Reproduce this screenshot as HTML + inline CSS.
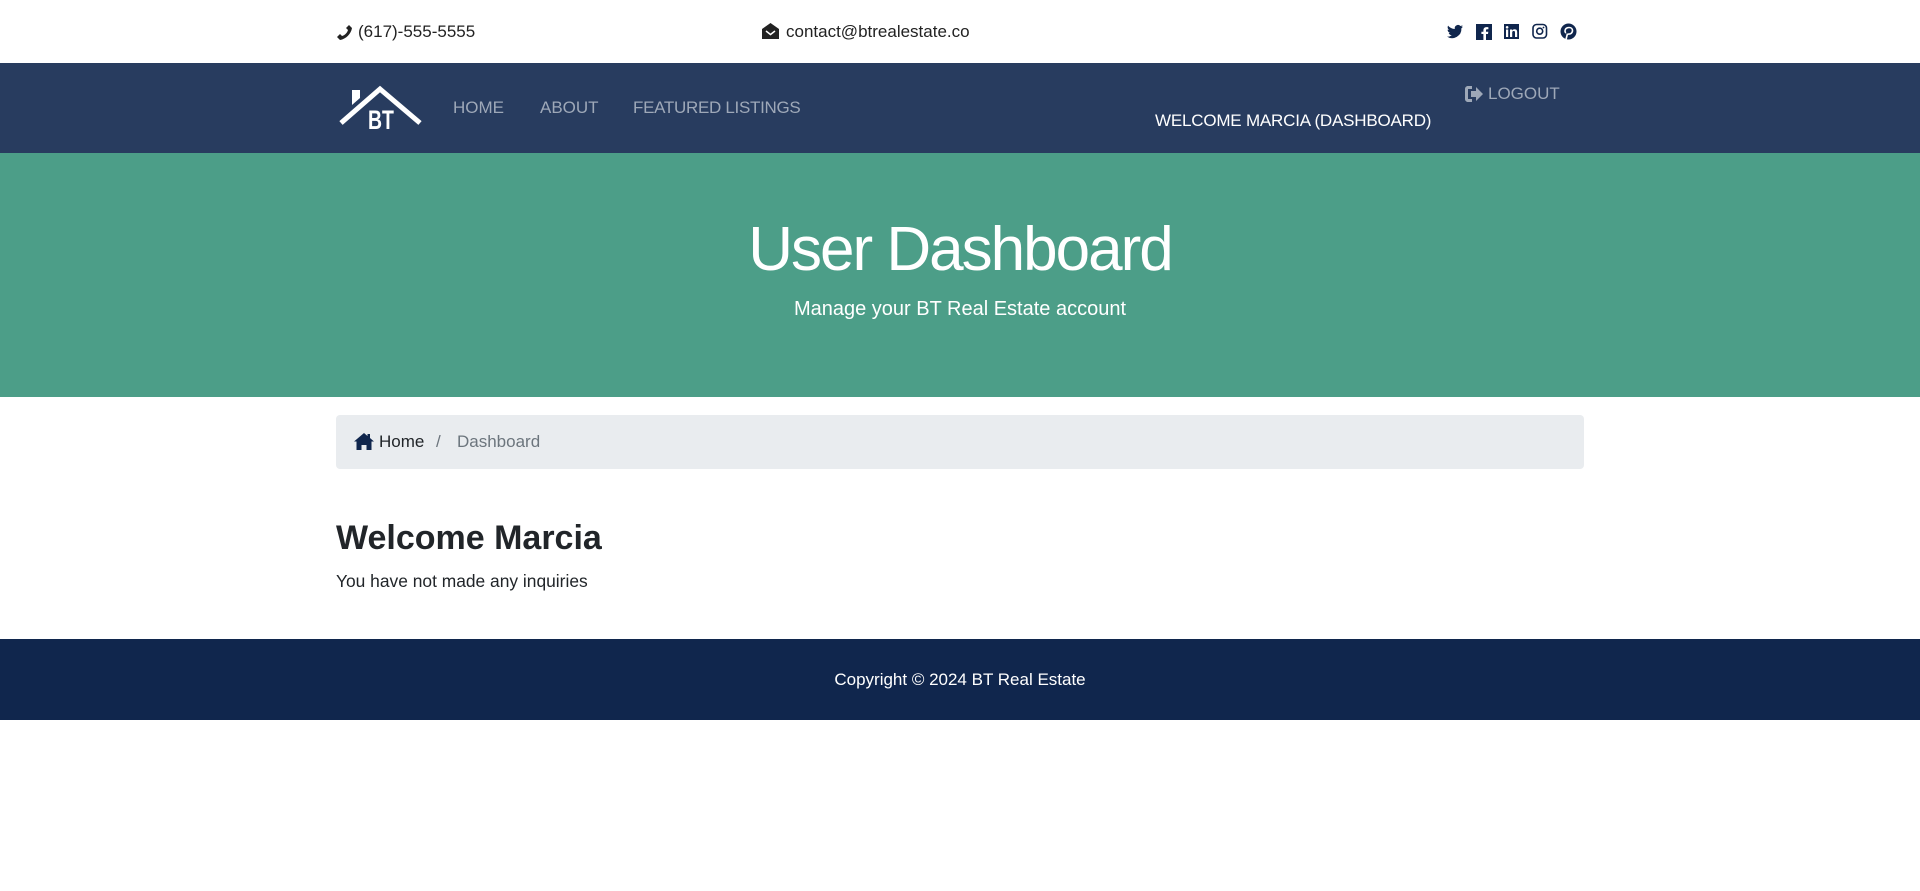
<!DOCTYPE html>
<html><head><meta charset="utf-8"><style>
*{margin:0;padding:0;box-sizing:border-box}
body{width:1920px;height:891px;background:#fff;font-family:"Liberation Sans",sans-serif;color:#212529;position:relative;overflow:hidden}
.a{position:absolute;white-space:nowrap}
</style></head><body>
<div class="a" style="left:0;top:0;width:1920px;height:63px;background:#fff"></div>
<svg class="a" style="left:336px;top:24px" width="16" height="16" viewBox="0 0 16 16"><path d="M12 16C6 15 1 10 0 4L3 1l3 3-2 2c1 3 3 5 6 6l2-2 3 3z" fill="#222" transform="scale(-1,1) translate(-16,0)"/></svg>
<div class="a" style="left:358px;top:22px;font-size:17px;color:#222">(617)-555-5555</div>
<svg class="a" style="left:762px;top:23px" width="17" height="16" viewBox="0 0 17 16"><path d="M0 6L8.5 0 17 6V16H0z" fill="#222"/><path d="M4 8l4.5 3.5L13 8" stroke="#fff" stroke-width="1.5" fill="none"/></svg>
<div class="a" style="left:786px;top:22px;font-size:17px;color:#222">contact@btrealestate.co</div>
<svg class="a" style="left:1447px;top:23px" width="132" height="17" viewBox="0 0 132 17">
<path d="M16 3.5c-.6.3-1.2.4-1.9.5.7-.4 1.2-1 1.4-1.8-.6.4-1.300.6-2.1.8A3.3 3.3 0 0 0 7.8 6C5.1 5.9 2.7 4.6 1.1 2.6c-.9 1.5-.4 3.4 1 4.4-.5 0-1-.2-1.5-.4 0 1.600 1.1 3 2.6 3.3-.5.1-1 .2-1.5.1.4 1.3 1.7 2.3 3.1 2.3A6.6 6.6 0 0 1 0 13.6 9.3 9.3 0 0 0 14.4 5.3c.6-.5 1.2-1 1.6-1.8z" fill="#10264d"/>
<rect x="29" y="1" width="16" height="16" fill="#10264d"/><path d="M39 17v-6h2l.3-2.3H39V7.3c0-.7.2-1.1 1.1-1.1h1.3V4.2c-.2 0-1-.1-1.9-.1-1.9 0-3.1 1.1-3.1 3.2v1.4h-2V11h2v6z" fill="#fff"/>
<rect x="57" y="1" width="15" height="15" fill="#10264d"/><rect x="59" y="6.5" width="2.2" height="7.5" fill="#fff"/><circle cx="60.1" cy="4.3" r="1.3" fill="#fff"/><path d="M63 6.5h2.1v1.1c.4-.7 1.3-1.3 2.5-1.3 2.2 0 2.6 1.4 2.6 3.3V14H68V10c0-1 0-2-1.3-2s-1.5 1-1.5 2v4H63z" fill="#fff"/>
<rect x="86" y="1.5" width="13.5" height="13.5" rx="3.5" fill="none" stroke="#10264d" stroke-width="1.6"/><circle cx="92.7" cy="8.2" r="3" fill="none" stroke="#10264d" stroke-width="1.6"/><circle cx="96.5" cy="4.5" r=".9" fill="#10264d"/>
<circle cx="121.5" cy="8.5" r="8" fill="#10264d"/><path d="M120.5 10.5l-1.5 6M122 4.5c-2.5 0-4 1.6-4 3.4 0 1 .4 1.7 1 2 M121 11c2.8.5 4.5-1.3 4.5-3.5 0-1.8-1.5-3-3.5-3" stroke="#fff" stroke-width="1.6" fill="none"/>
</svg>
<div class="a" style="left:0;top:63px;width:1920px;height:90px;background:#283c5f"></div>
<svg class="a" style="left:338px;top:84px" width="86" height="46" viewBox="0 0 86 46">
<path d="M3 39L42 5 82 39" stroke="#fff" stroke-width="5" fill="none"/>
<path d="M14 6h8v8l-8 7z" fill="#fff"/>
<text x="0" y="45" transform="translate(30,0) scale(0.72,1)" font-family="Liberation Sans,sans-serif" font-weight="bold" font-size="27" fill="#fff">BT</text>
</svg>
<div class="a" style="left:453px;top:98px;font-size:17px;color:#9ea8b8">HOME</div>
<div class="a" style="left:540px;top:98px;font-size:17px;color:#9ea8b8">ABOUT</div>
<div class="a" style="left:633px;top:98px;font-size:17px;color:#9ea8b8;letter-spacing:-.3px">FEATURED LISTINGS</div>
<div class="a" style="left:1155px;top:111px;font-size:17px;color:#fff;letter-spacing:-.2px">WELCOME MARCIA (DASHBOARD)</div>
<svg class="a" style="left:1465px;top:86px" width="19" height="16" viewBox="0 0 19 16"><path d="M7 0H3C1.3 0 0 1.3 0 3v10c0 1.7 1.3 3 3 3h4v-3H3V3h4z" fill="#9ea8b8"/><path d="M6 5h5V1l7 7-7 7v-4H6z" fill="#9ea8b8"/></svg>
<div class="a" style="left:1488px;top:84px;font-size:17px;color:#9ea8b8">LOGOUT</div>
<div class="a" style="left:0;top:153px;width:1920px;height:244px;background:#4c9e88"></div>
<div class="a" style="left:0;top:214px;width:1920px;text-align:center;font-size:62px;color:#fff;letter-spacing:-2px">User Dashboard</div>
<div class="a" style="left:0;top:298px;width:1920px;text-align:center;font-size:20px;color:#fff">Manage your BT Real Estate account</div>
<div class="a" style="left:336px;top:415px;width:1248px;height:54px;background:#e9ecef;border-radius:4px"></div>
<svg class="a" style="left:354px;top:433px" width="20" height="17" viewBox="0 0 20 17"><path d="M10 0L0 8.5h2.5V17h5v-5h5v5h5V8.5H20L16 5V1h-2.5v2z" fill="#10264d"/></svg>
<div class="a" style="left:379px;top:432px;font-size:17px;color:#212529">Home</div>
<div class="a" style="left:436px;top:432px;font-size:17px;color:#6c757d">/</div>
<div class="a" style="left:457px;top:432px;font-size:17px;color:#6c757d">Dashboard</div>
<div class="a" style="left:336px;top:519px;font-size:34px;font-weight:bold;color:#212529">Welcome Marcia</div>
<div class="a" style="left:336px;top:571px;font-size:17.4px;color:#212529">You have not made any inquiries</div>
<div class="a" style="left:0;top:639px;width:1920px;height:81px;background:#10264d"></div>
<div class="a" style="left:0;top:670px;width:1920px;text-align:center;font-size:17px;color:#fff">Copyright © 2024 BT Real Estate</div>
</body></html>
